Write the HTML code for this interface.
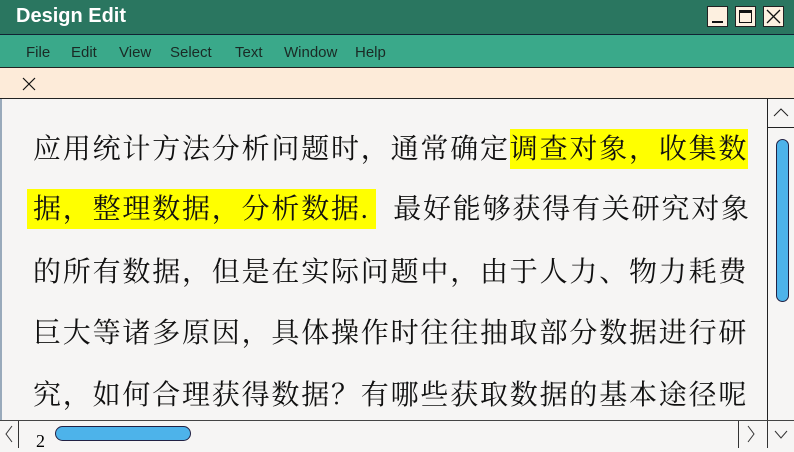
<!DOCTYPE html>
<html><head><meta charset="utf-8"><style>
*{margin:0;padding:0;box-sizing:border-box}
body{width:794px;height:447px;overflow:hidden;background:#f6f5f4;position:relative;font-family:"Liberation Sans",sans-serif}
.title{position:absolute;left:0;top:0;width:794px;height:35px;background:#2a7660;border-bottom:1px solid #123;}
.title span{position:absolute;left:16px;top:5px;color:#fff;font-weight:bold;font-size:20px}
.btn{position:absolute;top:6px;width:21px;height:21px;background:#fdf0e0;border:1px solid #222}
.menu{position:absolute;left:0;top:35px;width:794px;height:33px;background:#3aa98a;border-bottom:1px solid #222}
.menu span{position:absolute;top:9px;font-size:15px;color:#1a2a25}
.tabs{position:absolute;left:0;top:68px;width:794px;height:31px;background:#fdebd9;border-bottom:1px solid #222}
.vs{position:absolute;left:767px;top:99px;width:27px;height:321px;border-left:1px solid #222;background:#f6f5f4}
.hs{position:absolute;left:0;top:420px;width:794px;height:27px;border-top:1px solid #444;background:#f6f5f4}
.line{position:absolute;left:33px;font-family:"Liberation Serif","Noto Serif CJK SC",serif;font-size:28px;letter-spacing:1.8px;color:#111;white-space:nowrap}
.hl{background:#ffff00;padding:5px 0 4px}
</style></head><body>
<div class="title"><span>Design Edit</span>
<div class="btn" style="left:707px"><div style="position:absolute;left:4px;top:14px;width:11px;height:2px;background:#111"></div></div>
<div class="btn" style="left:735px"><div style="position:absolute;left:3px;top:3px;width:13px;height:13px;border:1px solid #111;border-top:3px solid #111"></div></div>
<div class="btn" style="left:763px"><svg width="19" height="19" style="position:absolute;left:0;top:0"><path d="M3 3L16 16M16 3L3 16" stroke="#111" stroke-width="1.3"/></svg></div>
</div>
<div class="menu"><span style="left:26px">File</span><span style="left:71px">Edit</span><span style="left:119px">View</span><span style="left:170px">Select</span><span style="left:235px">Text</span><span style="left:284px">Window</span><span style="left:355px">Help</span></div>
<div class="tabs"><svg width="14" height="14" style="position:absolute;left:22px;top:9px"><path d="M1 1L13 13M13 1L1 13" stroke="#111" stroke-width="1.2"/></svg></div>
<div style="position:absolute;left:0;top:99px;width:2px;height:321px;background:#9ab"></div>
<div class="line" style="top:127px">应用统计方法分析问题时，通常确定<span class="hl">调查对象，收集数</span></div>
<div class="line" style="top:187px;"><span class="hl" style="margin-left:-6px;padding-left:6px;padding-right:6px">据，整理数据，分析数据.</span>&nbsp;&nbsp;最好能够获得有关研究对象</div>
<div class="line" style="top:250px">的所有数据，但是在实际问题中，由于人力、物力耗费</div>
<div class="line" style="top:311px">巨大等诸多原因，具体操作时往往抽取部分数据进行研</div>
<div class="line" style="top:373px">究，如何合理获得数据？有哪些获取数据的基本途径呢</div>
<div class="vs"><div style="height:29px;border-bottom:1px solid #222"><svg width="26" height="28"><path d="M6 17L13 10L20 17" stroke="#222" fill="none" stroke-width="1"/></svg></div>
<div style="position:absolute;left:8px;top:40px;width:13px;height:163px;background:#4db3ea;border:1px solid #224;border-radius:7px"></div></div>
<div class="hs">
<div style="position:absolute;left:18px;top:0;width:1px;height:27px;background:#333"></div>
<svg width="18" height="26" style="position:absolute;left:0;top:0"><path d="M12 5L6 13L12 21" stroke="#333" fill="none"/></svg>
<div style="position:absolute;left:36px;top:10px;font-size:18px;font-family:'Liberation Serif',serif">2</div>
<div style="position:absolute;left:55px;top:5px;width:136px;height:15px;background:#4db3ea;border:1px solid #224;border-radius:8px"></div>
<div style="position:absolute;left:738px;top:0;width:1px;height:27px;background:#333"></div>
<svg width="18" height="26" style="position:absolute;left:742px;top:0"><path d="M6 5L12 13L6 21" stroke="#333" fill="none"/></svg>
<div style="position:absolute;left:767px;top:0;width:1px;height:27px;background:#333"></div>
<svg width="26" height="26" style="position:absolute;left:768px;top:0"><path d="M7 10L13 17L19 10" stroke="#333" fill="none"/></svg>
</div>
</body></html>
